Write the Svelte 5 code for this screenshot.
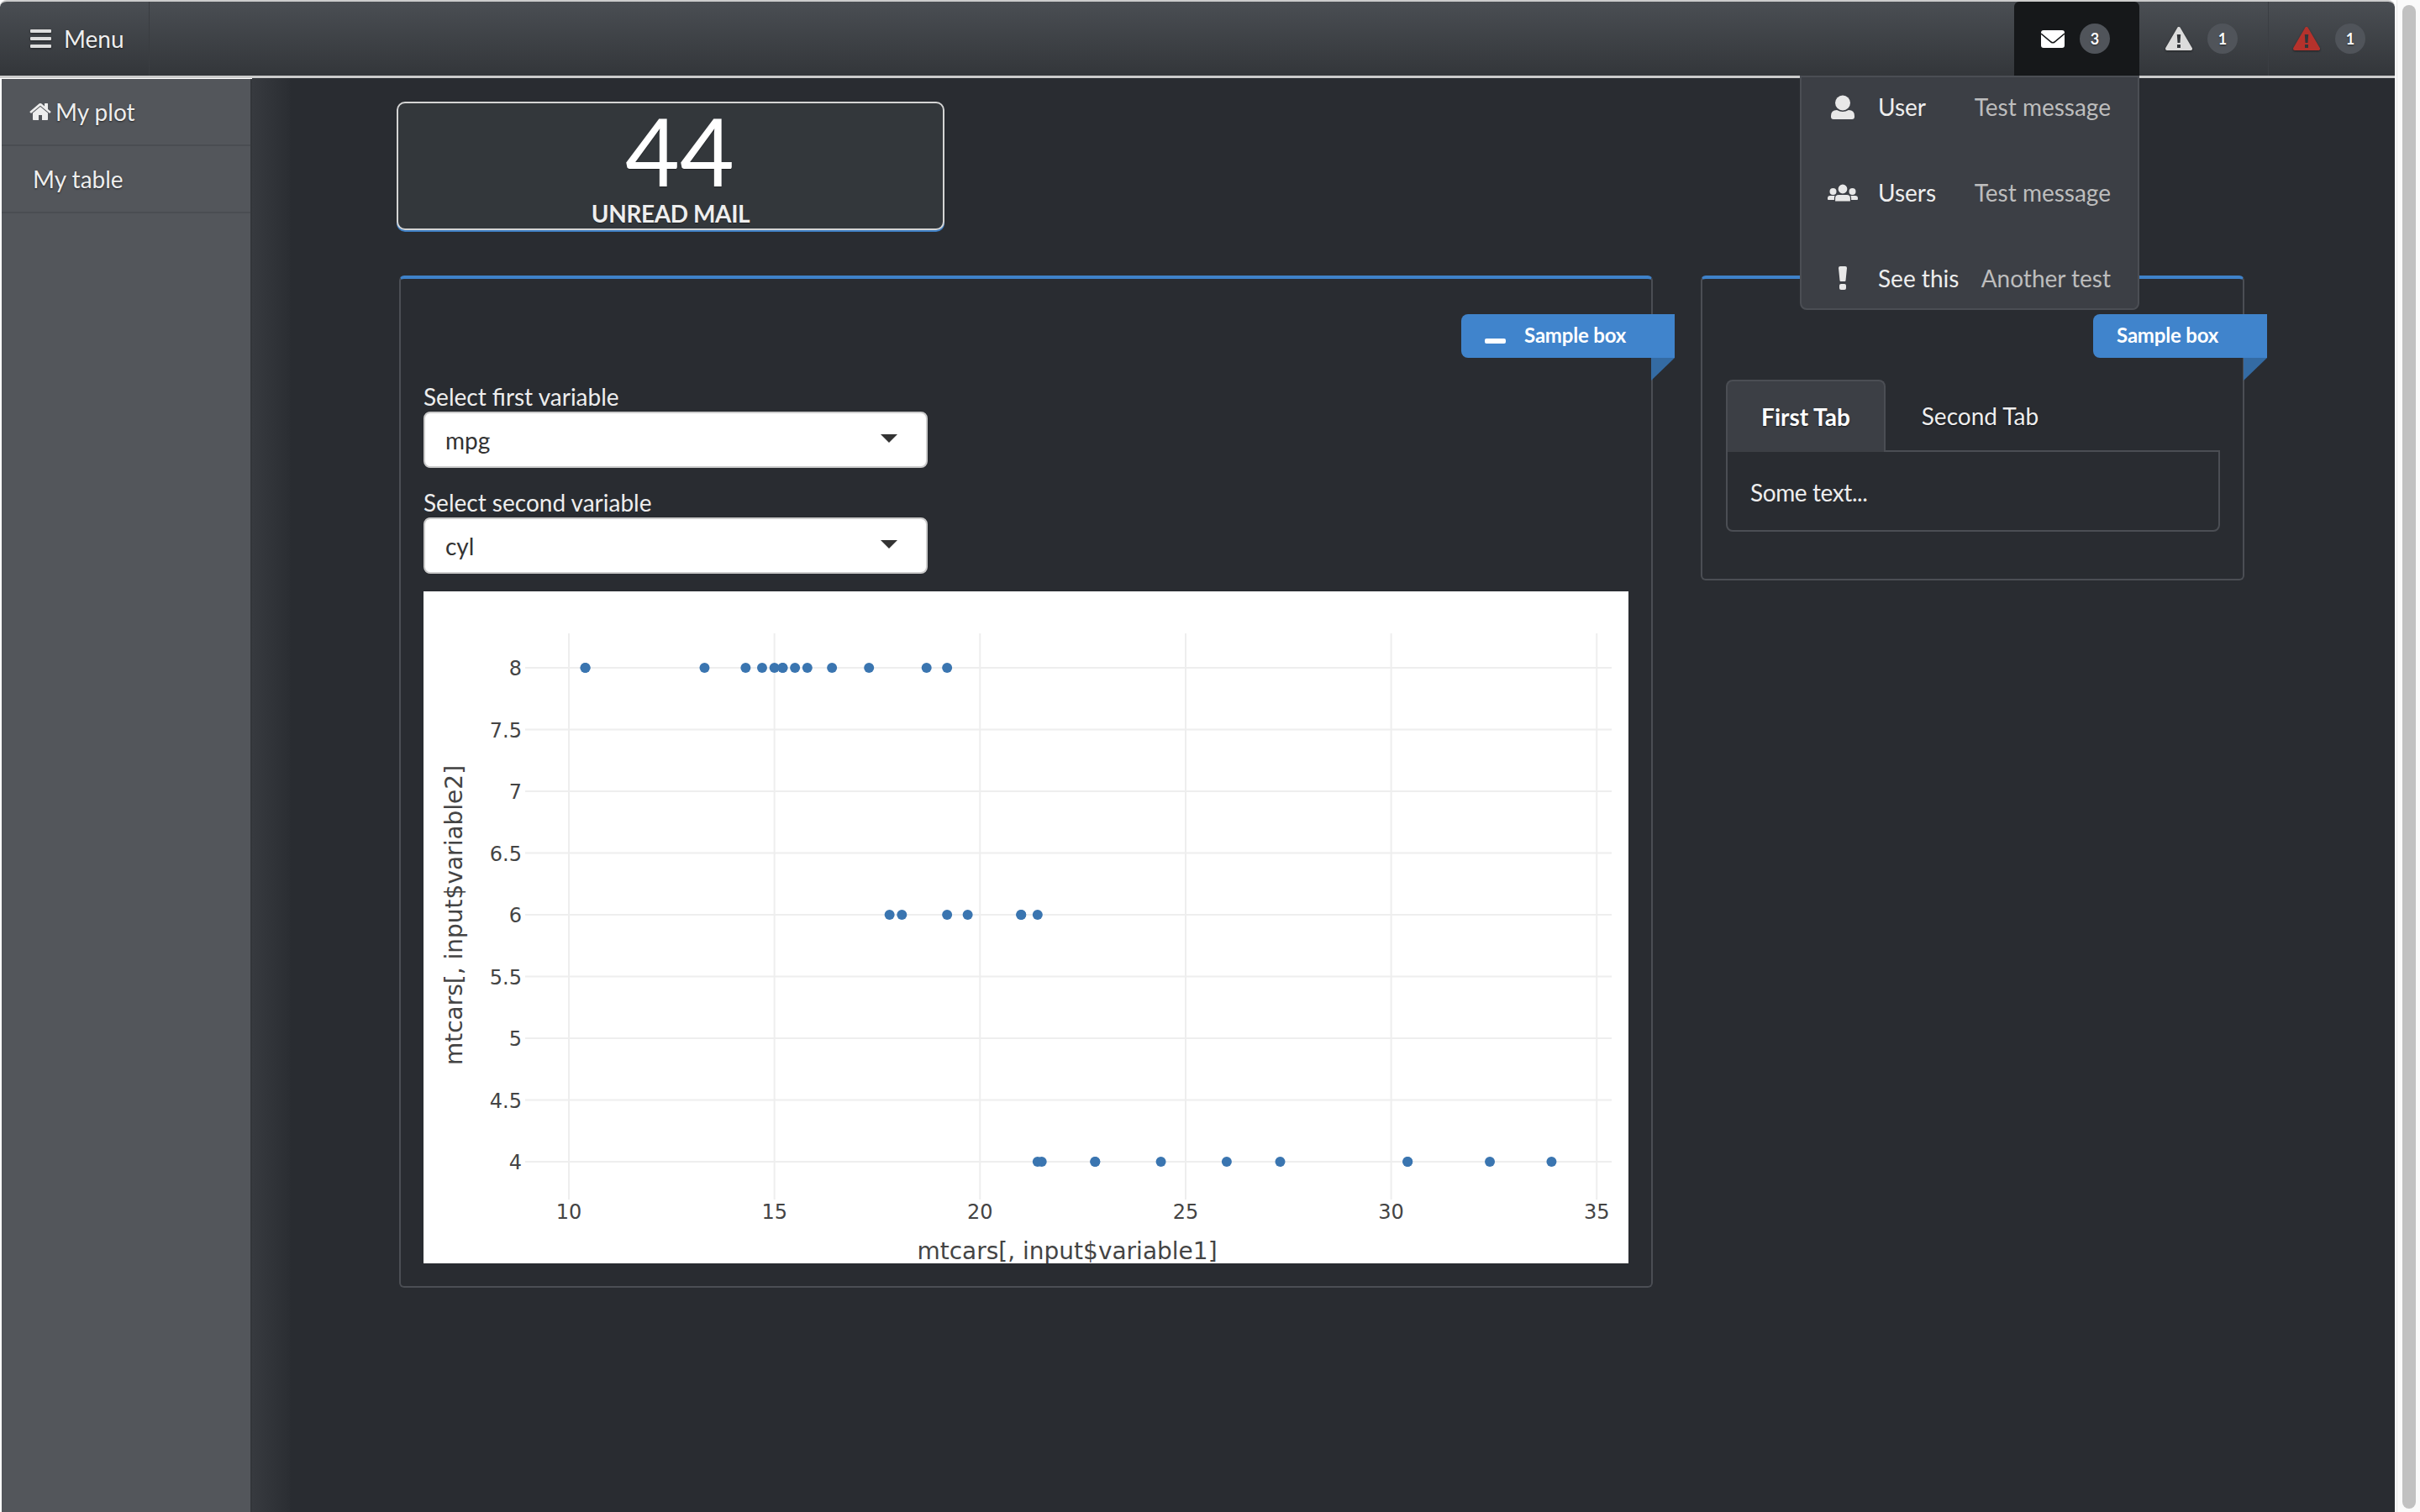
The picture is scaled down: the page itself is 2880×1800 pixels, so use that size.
<script>
  // mtcars: [mpg, cyl]
  const cars = [
    [21, 6], [21, 6], [22.8, 4], [21.4, 6], [18.7, 8], [18.1, 6], [14.3, 8], [24.4, 4],
    [22.8, 4], [19.2, 6], [17.8, 6], [16.4, 8], [17.3, 8], [15.2, 8], [10.4, 8], [10.4, 8],
    [14.7, 8], [32.4, 4], [30.4, 4], [33.9, 4], [21.5, 4], [15.5, 8], [15.2, 8], [13.3, 8],
    [19.2, 8], [27.3, 4], [26, 4], [30.4, 4], [15.8, 8], [19.7, 6], [15, 8], [21.4, 4]
  ];
  const xTicks = [10, 15, 20, 25, 30, 35];
  const yTicks = [4, 4.5, 5, 5.5, 6, 6.5, 7, 7.5, 8];

  // plot coordinates: x origin sits at 505 in the page, y origin at 704
  const px = (v) => 172 + (v - 10) * 48.93;
  const py = (v) => 679 - (v - 4) * 147;

  const messages = [
    { icon: 'user', from: 'User', text: 'Test message' },
    { icon: 'users', from: 'Users', text: 'Test message' },
    { icon: 'bang', from: 'See this', text: 'Another test' }
  ];
</script>

<div class="window">
  <header class="topbar">
    <div class="toggle">
      <svg class="bars" viewBox="0 0 25 22" aria-hidden="true">
        <rect y="0" width="25" height="4" rx="1" />
        <rect y="9" width="25" height="4" rx="1" />
        <rect y="18" width="25" height="4" rx="1" />
      </svg>
      <span>Menu</span>
    </div>
    <nav class="notifs">
      <div class="notif active">
        <svg class="ico-mail" viewBox="0 0 28 21" aria-hidden="true">
          <rect width="28" height="21" rx="3" fill="#fff" />
          <path d="M0 4 L12 14 Q14 15.5 16 14 L28 4" fill="none" stroke="#16181a" stroke-width="1.6" />
        </svg>
        <span class="badge">3</span>
      </div>
      <div class="notif">
        <svg class="ico-warn" viewBox="0 0 32 30" aria-hidden="true">
          <path d="M16 3 L30 27 H2 Z" fill="#dcdcdc" stroke="#dcdcdc" stroke-width="4" stroke-linejoin="round" />
          <path d="M13.8 10 H18.2 L17.5 20 H14.5 Z M14 22 H18 V26 H14 Z" fill="#33363a" />
        </svg>
        <span class="badge">1</span>
      </div>
      <div class="notif last">
        <svg class="ico-warn" viewBox="0 0 32 30" aria-hidden="true">
          <path d="M16 3 L30 27 H2 Z" fill="#b5322c" stroke="#b5322c" stroke-width="4" stroke-linejoin="round" />
          <path d="M13.8 10 H18.2 L17.5 20 H14.5 Z M14 22 H18 V26 H14 Z" fill="#33363a" />
        </svg>
        <span class="badge">1</span>
      </div>
    </nav>

    <ul class="menu">
      {#each messages as m}
        <li>
          <span class="menu-icon">
            {#if m.icon === 'user'}
              <svg width="28" height="29" viewBox="0 0 28 29" aria-hidden="true">
                <circle cx="14" cy="9.5" r="9" />
                <path d="M0 25 Q0 18 7 18 Q14 22 21 18 Q28 18 28 25 V26 Q28 29 25 29 H3 Q0 29 0 26 Z" />
              </svg>
            {:else if m.icon === 'users'}
              <svg width="36" height="21" viewBox="0 0 36 21" aria-hidden="true">
                <circle cx="6.5" cy="9" r="4" />
                <circle cx="29.5" cy="9" r="4" />
                <path d="M0 17 Q0 14 3 14 H33 Q36 14 36 17 V18 Q36 19 35 19 H1 Q0 19 0 18 Z" />
                <circle cx="18" cy="6" r="6" class="cut" />
                <path d="M8.5 21 V17 Q8.5 12.5 13 12.5 H23 Q27.5 12.5 27.5 17 V21 Z" class="cut" />
              </svg>
            {:else}
              <svg width="12" height="28" viewBox="0 0 12 28" aria-hidden="true"><path d="M1 2 Q1 0 3 0 H9 Q11 0 11 2 L9.5 17 Q9.4 18 8.5 18 H3.5 Q2.6 18 2.5 17 Z" /><rect x="2" y="21" width="8" height="7" rx="2" /></svg>
            {/if}
          </span>
          <span class="from">{m.from}</span>
          <span class="text">{m.text}</span>
        </li>
      {/each}
    </ul>
  </header>

  <div class="body">
    <aside class="sidebar">
      <a class="side-item">
        <svg class="home" viewBox="0 0 1792 1792" aria-hidden="true"><path d="M1472 992v480q0 26-19 45t-45 19h-384v-384h-256v384h-384q-26 0-45-19t-19-45v-480q0-1 .5-3t.5-3l575-474 575 474q1 2 1 6zm223-69l-62 74q-8 9-21 11h-3q-13 0-21-7l-692-577-692 577q-12 8-24 7-13-2-21-11l-62-74q-8-10-7-23.5t11-21.5l719-599q32-26 76-26t76 26l244 204v-195q0-14 9-23t23-9h192q14 0 23 9t9 23v408l219 182q10 8 11 21.5t-7 23.5z" /></svg>
        My plot
      </a>
      <a class="side-item plain">My table</a>
    </aside>

    <main class="content">
      <div class="value-box">
        <div class="value">44</div>
        <div class="value-label">UNREAD MAIL</div>
      </div>

      <div class="row">
        <section class="box wide">
          <div class="ribbon">
            <span class="minus"></span>
            <span>Sample box</span>
          </div>
          <label class="field-label" for="var1">Select first variable</label>
          <div class="select" id="var1"><span>mpg</span><i class="caret"></i></div>
          <label class="field-label second" for="var2">Select second variable</label>
          <div class="select" id="var2"><span>cyl</span><i class="caret"></i></div>

          <div class="plot">
            <svg width="1434" height="800" viewBox="-1 0 1434 800" role="img" aria-label="scatter plot">
              {#each xTicks as t}
                <line x1={px(t)} x2={px(t)} y1="50" y2="724" class="grid" />
                <text x={px(t)} y="747" class="tick" text-anchor="middle">{t}</text>
              {/each}
              {#each yTicks as t}
                <line x1="120" x2="1413" y1={py(t)} y2={py(t)} class="grid" />
                <text x="116" y={py(t) + 9} class="tick" text-anchor="end">{t}</text>
              {/each}
              {#each cars as [mpg, cyl]}
                <circle cx={px(mpg)} cy={py(cyl)} r="6" class="dot" />
              {/each}
              <text x="765" y="795" class="axis" text-anchor="middle">mtcars[, input$variable1]</text>
              <text transform="translate(45 385.5) rotate(-90)" class="axis" text-anchor="middle">mtcars[, input$variable2]</text>
            </svg>
          </div>
        </section>

        <section class="box narrow">
          <div class="ribbon">
            <span>Sample box</span>
          </div>
          <div class="tabs">
            <div class="tab active">First Tab</div>
            <div class="tab">Second Tab</div>
          </div>
          <div class="tab-body">Some text...</div>
        </section>
      </div>
    </main>
  </div>

  <div class="scrollbar"><div class="thumb"></div></div>
</div>

<style>
  :global(body) {
    margin: 0;
    background: #fff;
  }
  .window {
    position: relative;
    width: 2880px;
    height: 1800px;
    overflow: hidden;
    display: flex;
    flex-direction: column;
    font-family: Lato, "Open Sans", sans-serif;
    font-size: 28px;
    color: #eee;
    box-sizing: border-box;
    padding-right: 30px;
    background: #fff;
  }

  .topbar {
    position: relative;
    flex: none;
    height: 88px;
    box-sizing: content-box;
    border-top: 2px solid #ccc;
    border-bottom: 3px solid #ccc;
    border-radius: 8px 8px 0 0;
    display: flex;
    justify-content: space-between;
    background: linear-gradient(#4a4e53, #33363a);
    text-shadow: 0 1px 2px rgba(0, 0, 0, 0.6);
  }
  .toggle {
    width: 178px;
    box-sizing: border-box;
    padding-left: 36px;
    display: flex;
    align-items: center;
    gap: 15px;
    border-right: 1px solid #3a3d41;
  }
  .bars {
    width: 25px;
    height: 22px;
    fill: #ddd;
    filter: drop-shadow(0 1px 1px rgba(0, 0, 0, 0.5));
  }
  .notifs {
    display: flex;
  }
  .notif {
    width: 154px;
    box-sizing: border-box;
    padding-left: 31px;
    display: flex;
    align-items: center;
    gap: 18px;
    border-right: 1px solid #3b3e43;
  }
  .notif.last {
    width: 150px;
    padding-left: 29px;
    border-right: 0;
  }
  .notif.active {
    width: 149px;
    padding-left: 32px;
    background: #16181a;
    border-right: 0;
    border-radius: 6px 6px 0 0;
  }
  .ico-mail {
    width: 28px;
    height: 21px;
  }
  .ico-warn {
    width: 32px;
    height: 30px;
    filter: drop-shadow(0 1px 1px rgba(0, 0, 0, 0.5));
  }
  .badge {
    width: 36px;
    height: 36px;
    border-radius: 50%;
    background: #50545a;
    color: #fff;
    font-size: 18px;
    font-weight: 700;
    display: flex;
    align-items: center;
    justify-content: center;
  }

  .menu {
    position: absolute;
    top: 88px;
    right: 304px;
    z-index: 5;
    width: 404px;
    box-sizing: border-box;
    height: 279px;
    margin: 0;
    padding: 0;
    list-style: none;
    background: #3c3f45;
    border: 2px solid #4b4e54;
    border-radius: 0 0 8px 8px;
    text-shadow: none;
  }
  .menu li {
    height: 102px;
    box-sizing: border-box;
    padding: 0 32px 32px 0;
    display: flex;
    align-items: center;
  }
  .menu-icon {
    width: 97px;
    margin-right: -6px;
    flex: none;
    display: flex;
    justify-content: center;
    box-sizing: border-box;
  }
  .menu-icon svg {
    fill: #e8e8e8;
  }
  .menu-icon .cut {
    stroke: #3c3f45;
    stroke-width: 1.2;
  }
  .from {
    color: #eee;
  }
  .text {
    margin-left: auto;
    color: #bdbdbd;
  }

  .body {
    flex: 1;
    min-height: 0;
    display: flex;
  }
  .sidebar {
    width: 296px;
    margin-left: 2px;
    margin-top: 1px;
    flex: none;
    background: #53565b;
    border-right: 2px solid #33363a;
    text-shadow: 0 1px 2px rgba(0, 0, 0, 0.6);
  }
  .side-item {
    height: 80px;
    box-sizing: border-box;
    display: flex;
    align-items: center;
    gap: 4px;
    padding-left: 32px;
    border-bottom: 2px solid #4a4d52;
    color: #eee;
  }
  .side-item.plain {
    padding-left: 37px;
  }
  .home {
    width: 28px;
    height: 28px;
    fill: #eee;
  }

  .content {
    flex: 1;
    min-width: 0;
    padding: 28px 0 0 172px;
    background: linear-gradient(90deg, #373a3f 0, #2b2e33 44px, #292c31 46px);
  }
  .value-box {
    width: 652px;
    height: 153px;
    box-sizing: border-box;
    border: 2px solid #d4d4d4;
    border-radius: 10px;
    box-shadow: 0 2px 0 #3f7fc4;
    background: #33373b;
    text-align: center;
    text-shadow: 0 1px 1px rgba(0, 0, 0, 0.4);
  }
  .value {
    height: 104px;
    font-size: 112px;
    font-weight: 400;
    line-height: 104px;
    margin-top: 4px;
    padding-left: 22px;
    color: #fff;
  }
  .value-label {
    font-weight: 700;
    line-height: 34px;
    margin-top: 6px;
    letter-spacing: -0.4px;
  }

  .row {
    display: flex;
    align-items: flex-start;
    gap: 57px;
    margin: 54px 0 0 3px;
  }
  .box {
    position: relative;
    box-sizing: border-box;
    border: 2px solid #4b4e54;
    border-top: 4px solid #3f82c9;
    border-radius: 6px;
  }
  .box.wide {
    width: 1492px;
    height: 1205px;
    padding: 124px 27px 0;
  }
  .box.narrow {
    width: 647px;
    height: 363px;
    padding: 120px 28px 0;
  }
  .ribbon {
    position: absolute;
    top: 42px;
    right: -29px;
    height: 52px;
    box-sizing: border-box;
    display: flex;
    align-items: center;
    padding: 0 58px 3px 28px;
    gap: 22px;
    background: #4084cc;
    border-radius: 8px 0 0 8px;
    color: #fff;
    font-size: 24px;
    font-weight: 700;
    letter-spacing: -0.2px;
    white-space: nowrap;
  }
  .wide .ribbon {
    right: -28px;
  }
  .ribbon::after {
    content: "";
    position: absolute;
    right: 0;
    top: 52px;
    border-top: 27px solid #346ba3;
    border-right: 28px solid transparent;
  }
  .minus {
    width: 25px;
    height: 6px;
    margin-top: 14px;
    border-radius: 2px;
    background: #fff;
  }

  .field-label {
    display: block;
    height: 34px;
    line-height: 32px;
    color: #eee;
  }
  .field-label.second {
    margin-top: 25px;
  }
  .select {
    width: 600px;
    height: 67px;
    box-sizing: border-box;
    border: 2px solid #ccc;
    border-radius: 8px;
    background: #fff;
    color: #333;
    display: flex;
    align-items: center;
    justify-content: space-between;
    padding: 0 34px 0 24px;
  }
  .caret {
    border-top: 10px solid #333;
    border-left: 10px solid transparent;
    border-right: 10px solid transparent;
    margin-top: -4px;
  }
  .plot {
    margin-top: 21px;
    width: 1434px;
    height: 800px;
    background: #fff;
  }
  .plot svg {
    display: block;
  }
  .grid {
    stroke: #eee;
    stroke-width: 2;
  }
  .tick {
    font-family: "DejaVu Sans", sans-serif;
    font-size: 24px;
    fill: #444;
  }
  .axis {
    font-family: "DejaVu Sans", sans-serif;
    font-size: 28px;
    fill: #444;
  }
  .dot {
    fill: #3a75b0;
  }

  .tabs {
    display: flex;
    height: 86px;
    margin-bottom: -2px;
    text-shadow: 0 1px 2px rgba(0, 0, 0, 0.6);
  }
  .tab {
    position: relative;
    width: 190px;
    box-sizing: border-box;
    display: flex;
    align-items: center;
    justify-content: center;
    white-space: nowrap;
  }
  .tab.active {
    z-index: 1;
    background: #3c3f45;
    border: 2px solid #4b4e54;
    border-bottom: 0;
    border-radius: 8px 8px 0 0;
    font-weight: 700;
    color: #fff;
  }
  .tab:not(.active) {
    width: 225px;
  }
  .tab-body {
    width: 588px;
    height: 97px;
    box-sizing: border-box;
    padding: 2px 0 0 27px;
    display: flex;
    align-items: center;
    border: 2px solid #4b4e54;
    border-radius: 0 0 8px 8px;
    letter-spacing: -0.4px;
  }

  .scrollbar {
    position: absolute;
    top: 0;
    right: 0;
    bottom: 0;
    width: 28px;
    background: #fafafa;
    border-left: 1px solid #e8e8e8;
    box-sizing: border-box;
    padding: 6px 5px 0 6px;
  }
  .thumb {
    height: 1790px;
    border-radius: 9px;
    background: #c1c1c1;
  }
</style>
